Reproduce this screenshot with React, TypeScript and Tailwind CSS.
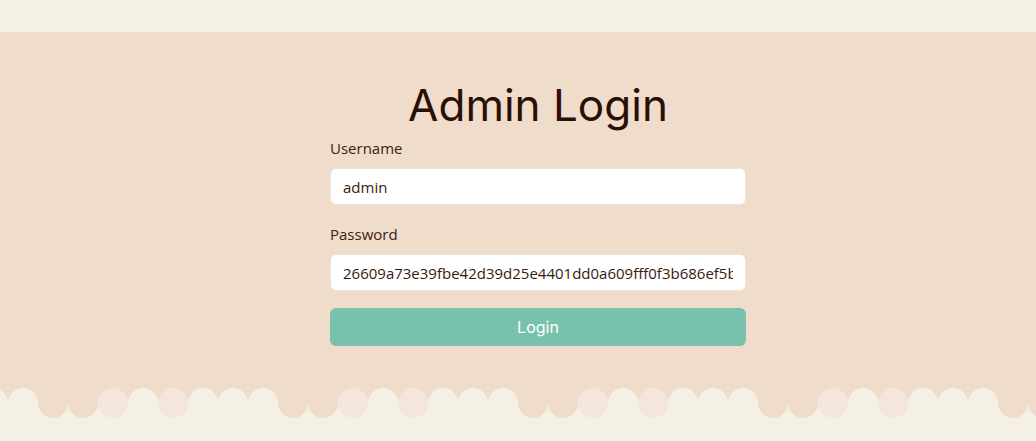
import type { ReactNode } from 'react';

const CREAM = '#f5f0e6';
const DARK = '#f0dccb';
const LIGHT = '#f4e6da';

// one period of the scallop pattern, repeats every 8 circles
const pattern = [DARK, DARK, LIGHT, CREAM, LIGHT, CREAM, CREAM, CREAM];

function Scallops() {
  const circles: ReactNode[] = [];
  for (let i = 0; i < 38; i++) {
    const cx = -7 + i * 30;
    const color = pattern[(i + 6) % 8];
    circles.push(<circle key={i} cx={cx} cy={15} r={15} fill={color} />);
  }
  return (
    <svg width="1036" height="38" className="block">
      <rect x="0" y="0" width="1036" height="15" fill={DARK} />
      <rect x="0" y="15" width="1036" height="23" fill={CREAM} />
      {circles}
    </svg>
  );
}

function Field({ label, value }: { label: string; value: string }) {
  return (
    <div className="flex flex-col">
      <label className="text-[15px] leading-6 text-[#3b2216] mb-2">{label}</label>
      <input
        readOnly
        value={value}
        className="h-[37px] w-full rounded-md border border-[#ebe3dc] bg-white px-3 text-[15px] text-[#3a1a0a] outline-none"
      />
    </div>
  );
}

export default function App() {
  return (
    <div className="w-[1036px] h-[441px] bg-[#f5f0e6] font-['Open_Sans',sans-serif] overflow-hidden">
      <div className="h-8" />
      <div className="bg-[#f0dccb] h-[356px] flex justify-center pl-10 pt-[45px]">
        <div className="w-[416px] flex flex-col">
          <h1 className="text-center text-[44px] leading-[56px] text-[#2a0f05] font-['Inter',sans-serif] font-normal">
            Admin Login
          </h1>
          <div className="mt-[3px] flex flex-col gap-[17px]">
            <Field label="Username" value="admin" />
            <Field
              label="Password"
              value="26609a73e39fbe42d39d25e4401dd0a609fff0f3b686ef5b0c9e3a2d7f41c8b6"
            />
          </div>
          <button className="mt-[17px] h-[38px] w-full rounded-md bg-[#78c2ad] text-white text-[16px] font-['Inter',sans-serif]">
            Login
          </button>
        </div>
      </div>
      <Scallops />
    </div>
  );
}
